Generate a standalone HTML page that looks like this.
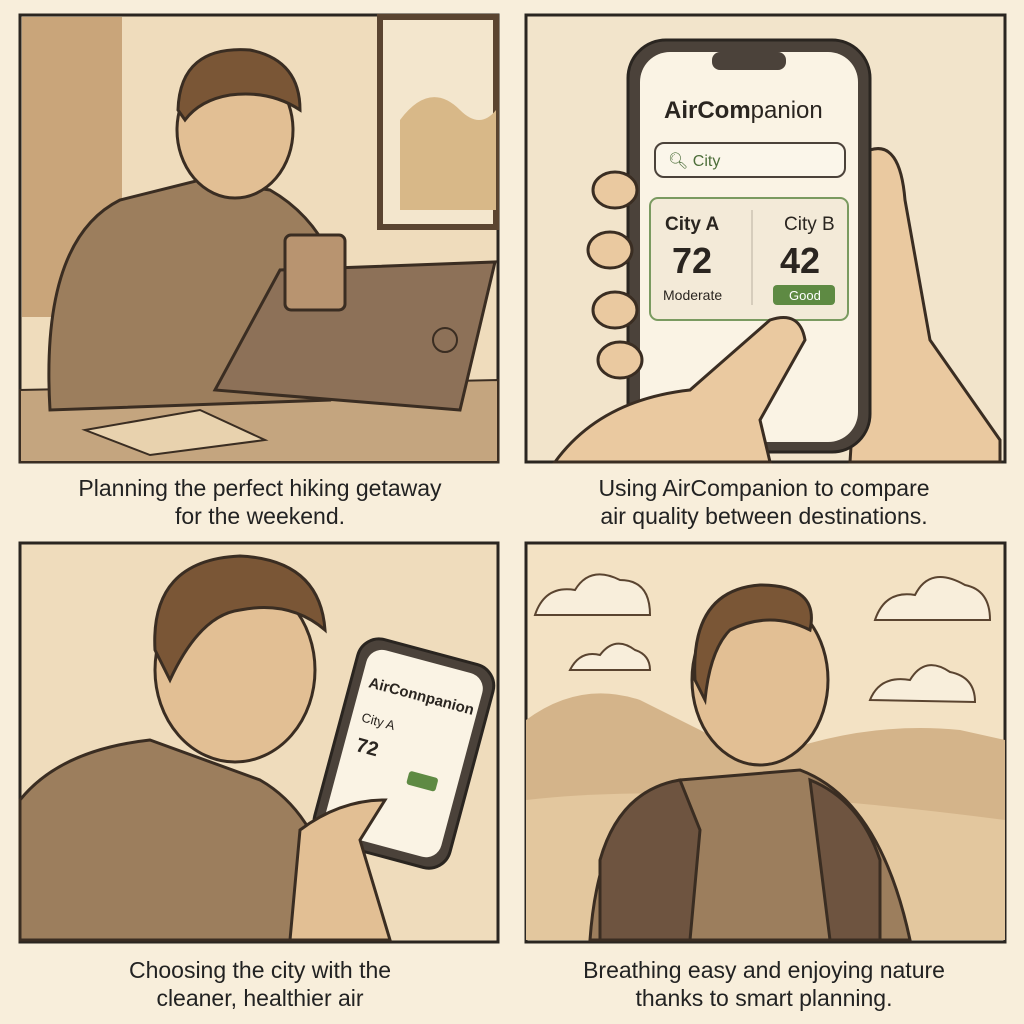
<!DOCTYPE html>
<html><head><meta charset="utf-8"><style>
body{margin:0;background:#f8eedb;width:1024px;height:1024px;overflow:hidden;font-family:"Liberation Sans",sans-serif}
.cap{position:absolute;width:500px;text-align:center;font-size:23px;line-height:28px;color:#222}
</style></head><body>
<svg width="1024" height="1024" style="position:absolute;left:0;top:0" font-family="Liberation Sans, sans-serif">
<!-- Panel 1 -->
<rect x="20" y="15" width="478" height="447" fill="#efdcbc" stroke="#2a2520" stroke-width="3"/>
<rect x="22" y="17" width="100" height="300" fill="#c9a57a"/>
<rect x="380" y="17" width="116" height="210" fill="#f3e6cd" stroke="#5a4430" stroke-width="6"/>
<path d="M400 120 q30 -40 60 -10 q20 20 36 0 v100 h-96z" fill="#d8b888"/>
<path d="M20 430 L20 390 L498 380 L498 462 L20 462z" fill="#c4a57f" stroke="#3a2d22" stroke-width="2"/>
<path d="M50 410 Q40 240 120 200 L200 180 L270 190 Q340 230 350 330 L330 400 Z" fill="#9c7e5d" stroke="#3a2d22" stroke-width="3"/>
<ellipse cx="235" cy="130" rx="58" ry="68" fill="#e2bf94" stroke="#3a2d22" stroke-width="3"/>
<path d="M178 110 Q180 45 250 50 Q300 60 300 110 Q270 90 230 95 Q200 100 185 120z" fill="#7a5636" stroke="#3a2d22" stroke-width="3"/>
<path d="M215 390 L280 270 L495 262 L460 410z" fill="#8d7158" stroke="#3a2d22" stroke-width="3"/>
<circle cx="445" cy="340" r="12" fill="none" stroke="#3a2d22" stroke-width="2"/>
<rect x="285" y="235" width="60" height="75" rx="6" fill="#b89470" stroke="#3a2d22" stroke-width="3"/>
<path d="M85 430 L200 410 L265 440 L150 455z" fill="#e8d2ae" stroke="#3a2d22" stroke-width="2"/>
<!-- Panel 2 -->
<rect x="526" y="15" width="479" height="447" fill="#f2e4cb" stroke="#2a2520" stroke-width="3"/>
<path d="M870 150 Q900 140 905 200 L930 340 L1000 440 L1000 462 L850 462 L870 150z" fill="#eac9a0" stroke="#3a2d22" stroke-width="3"/>
<rect x="628" y="40" width="242" height="412" rx="38" fill="#4b423a" stroke="#2a2520" stroke-width="3"/>
<rect x="640" y="52" width="218" height="390" rx="30" fill="#faf3e4"/>
<rect x="712" y="52" width="74" height="18" rx="8" fill="#4b423a"/>
<text x="664" y="118" font-size="24" fill="#2a2520" font-weight="bold">AirCom<tspan font-weight="normal">panion</tspan></text>
<rect x="655" y="143" width="190" height="34" rx="9" fill="#fbf6ea" stroke="#4b423a" stroke-width="2"/>
<text x="668" y="166" font-size="16" fill="#4d6e3a">🔍︎ City</text>
<rect x="650" y="198" width="198" height="122" rx="8" fill="#f3ead8" stroke="#7a9a60" stroke-width="2"/>
<line x1="752" y1="210" x2="752" y2="305" stroke="#b8b0a0" stroke-width="1"/>
<text x="665" y="230" font-size="19" font-weight="bold" fill="#2a2520">City A</text>
<text x="672" y="273" font-size="36" font-weight="bold" fill="#2a2520">72</text>
<text x="663" y="300" font-size="14" fill="#2a2520">Moderate</text>
<text x="784" y="230" font-size="19" fill="#2a2520">City B</text>
<text x="780" y="273" font-size="36" font-weight="bold" fill="#2a2520">42</text>
<rect x="773" y="285" width="62" height="20" rx="4" fill="#5e8a43"/>
<text x="789" y="300" font-size="13" fill="#fff">Good</text>
<path d="M555 462 Q600 400 690 390 L770 320 Q800 310 805 340 L760 420 L770 462z" fill="#eac9a0" stroke="#3a2d22" stroke-width="3"/>
<g fill="#eac9a0" stroke="#3a2d22" stroke-width="3"><ellipse cx="615" cy="190" rx="22" ry="18"/><ellipse cx="610" cy="250" rx="22" ry="18"/><ellipse cx="615" cy="310" rx="22" ry="18"/><ellipse cx="620" cy="360" rx="22" ry="18"/></g>
<!-- Panel 3 -->
<rect x="20" y="543" width="478" height="399" fill="#efdcbc" stroke="#2a2520" stroke-width="3"/>
<path d="M20 800 Q60 750 150 740 L260 780 Q330 820 340 940 L20 940z" fill="#9c7e5d" stroke="#3a2d22" stroke-width="3"/>
<ellipse cx="235" cy="670" rx="80" ry="92" fill="#e2bf94" stroke="#3a2d22" stroke-width="3"/>
<path d="M155 650 Q150 560 240 556 Q320 560 325 630 Q290 600 240 610 Q200 615 170 680z" fill="#7a5636" stroke="#3a2d22" stroke-width="3"/>
<g transform="rotate(15 410 750)"><rect x="335" y="650" width="140" height="210" rx="22" fill="#4b423a" stroke="#2a2520" stroke-width="3"/>
<rect x="345" y="660" width="120" height="190" rx="16" fill="#faf3e4"/>
<text x="353" y="700" font-size="15" font-weight="bold" fill="#2a2520">AirConnpanion</text>
<text x="355" y="735" font-size="13" fill="#2a2520">City A</text>
<text x="357" y="765" font-size="20" font-weight="bold" fill="#2a2520">72</text>
<rect x="415" y="770" width="30" height="14" rx="3" fill="#5e8a43"/></g>
<path d="M290 940 L300 830 Q340 800 385 800 L360 840 L390 940z" fill="#e2bf94" stroke="#3a2d22" stroke-width="3"/>
<!-- Panel 4 -->
<rect x="526" y="543" width="479" height="399" fill="#f3e2c4" stroke="#2a2520" stroke-width="3"/>
<path d="M526 720 Q580 680 640 700 L760 760 Q860 720 960 730 L1005 740 L1005 940 L526 940z" fill="#d4b48a"/>
<path d="M526 800 Q700 780 1005 820 L1005 940 L526 940z" fill="#e3c79e"/>
<g fill="#f8eedb" stroke="#5a4430" stroke-width="2"><path d="M535 615 q10-30 40-25 q15-25 45-10 q30 0 30 35z"/><path d="M875 620 q10-30 40-25 q15-30 50-10 q25 5 25 35z"/><path d="M870 700 q10-25 40-20 q15-25 40-8 q25 5 25 30z"/><path d="M570 670 q10-20 30-15 q15-20 35-5 q15 5 15 20z"/></g>
<path d="M590 940 Q600 800 680 780 L800 770 Q880 800 910 940z" fill="#9c7e5d" stroke="#3a2d22" stroke-width="3"/>
<ellipse cx="760" cy="680" rx="68" ry="85" fill="#e2bf94" stroke="#3a2d22" stroke-width="3"/>
<path d="M695 680 Q690 590 760 585 Q820 585 810 630 Q770 610 730 630 Q710 650 705 700z" fill="#7a5636" stroke="#3a2d22" stroke-width="3"/>
<path d="M600 860 Q620 790 680 780 L700 830 L690 940 L600 940z" fill="#6e5440" stroke="#3a2d22" stroke-width="3"/>
<path d="M810 780 Q860 800 880 860 L880 940 L830 940z" fill="#6e5440" stroke="#3a2d22" stroke-width="3"/>
</svg>
<div class="cap" style="left:10px;top:474px">Planning the perfect hiking getaway<br>for the weekend.</div>
<div class="cap" style="left:514px;top:474px">Using AirCompanion to compare<br>air quality between destinations.</div>
<div class="cap" style="left:10px;top:956px">Choosing the city with the<br>cleaner, healthier air</div>
<div class="cap" style="left:514px;top:956px">Breathing easy and enjoying nature<br>thanks to smart planning.</div>
</body></html>
